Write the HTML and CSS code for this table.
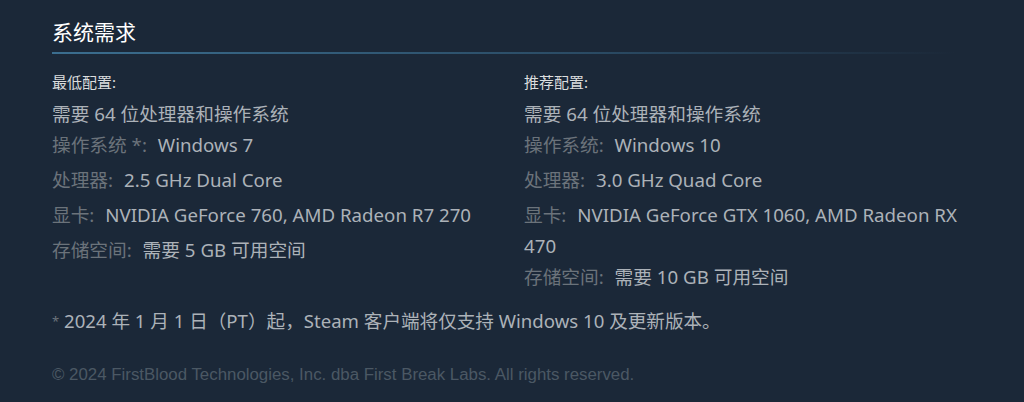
FILE: index.html
```html
<!DOCTYPE html>
<html lang="zh-CN">
<head>
    <meta charset="UTF-8">
    <meta name="viewport" content="width=device-width, initial-scale=1.0">
    <title>系统需求</title>
    <link rel="stylesheet" href="styles.css">
</head>
<body>
    <div class="sysreq">
        <h2>系统需求</h2>
        <div class="cols">
            <!-- 最低配置 -->
            <div class="col">
                <strong class="title">最低配置:</strong>
                <ul>
                    <li>需要 64 位处理器和操作系统</li>
                    <li><span class="label">操作系统 *:</span> Windows 7</li>
                    <li><span class="label">处理器:</span> 2.5 GHz Dual Core</li>
                    <li><span class="label">显卡:</span> NVIDIA GeForce 760, AMD Radeon R7 270</li>
                    <li><span class="label">存储空间:</span> 需要 5 GB 可用空间</li>
                </ul>
            </div>
            <!-- 推荐配置 -->
            <div class="col">
                <strong class="title">推荐配置:</strong>
                <ul>
                    <li>需要 64 位处理器和操作系统</li>
                    <li><span class="label">操作系统:</span> Windows 10</li>
                    <li><span class="label">处理器:</span> 3.0 GHz Quad Core</li>
                    <li class="wrapped"><span class="label">显卡:</span> NVIDIA GeForce GTX 1060, AMD Radeon RX 470</li>
                    <li><span class="label">存储空间:</span> 需要 10 GB 可用空间</li>
                </ul>
            </div>
        </div>
        <p class="note"><span class="star">*</span> 2024 年 1 月 1 日（PT）起，Steam 客户端将仅支持 Windows 10 及更新版本。</p>
        <p class="legal">© 2024 FirstBlood Technologies, Inc. dba First Break Labs. All rights reserved.</p>
    </div>
</body>
</html>
```

FILE: styles.css
```css
body {
    margin: 0;
    padding: 0;
    background-color: #1b2838;
    font-family: "Noto Sans", "Noto Sans CJK SC", sans-serif;
    color: #acb2b8;
}
.sysreq {
    width: 920px;
    margin: 0 0 0 52px;
    padding-top: 18px;
}
h2 {
    margin: 0;
    padding-bottom: 6px;
    font-size: 21px;
    font-weight: normal;
    color: #ffffff;
    line-height: 28px;
    border-bottom: 2px solid transparent;
    border-image: linear-gradient(to right, #3b6e8f 0%, #2a4a63 60%, rgba(27, 40, 56, 0) 98%) 1;
}
.cols {
    display: grid;
    grid-template-columns: 448px 448px;
    column-gap: 24px;
    margin-top: 17px;
}
.title {
    display: block;
    font-size: 15px;
    font-weight: normal;
    color: #dcdedf;
    line-height: 22px;
    margin-bottom: 5px;
}
ul {
    list-style: none;
    margin: 0;
    padding: 0;
}
li {
    font-size: 18.7px;
    line-height: 31px;
    margin-bottom: 4px;
    color: #acb2b8;
}
li:first-child,
li.wrapped {
    margin-bottom: 0;
}
.label {
    color: #6b737b;
    margin-right: 6px;
}
.note {
    margin: 12px 0 0;
    font-size: 18.6px;
    line-height: 26px;
    color: #acb2b8;
}
.star {
    font-size: 13px;
    color: #6b737b;
    vertical-align: top;
}
.legal {
    margin: 30px 0 0;
    font-family: "Liberation Sans", Arial, sans-serif;
    font-size: 16.85px;
    line-height: 22px;
    color: #4b5864;
}
```
